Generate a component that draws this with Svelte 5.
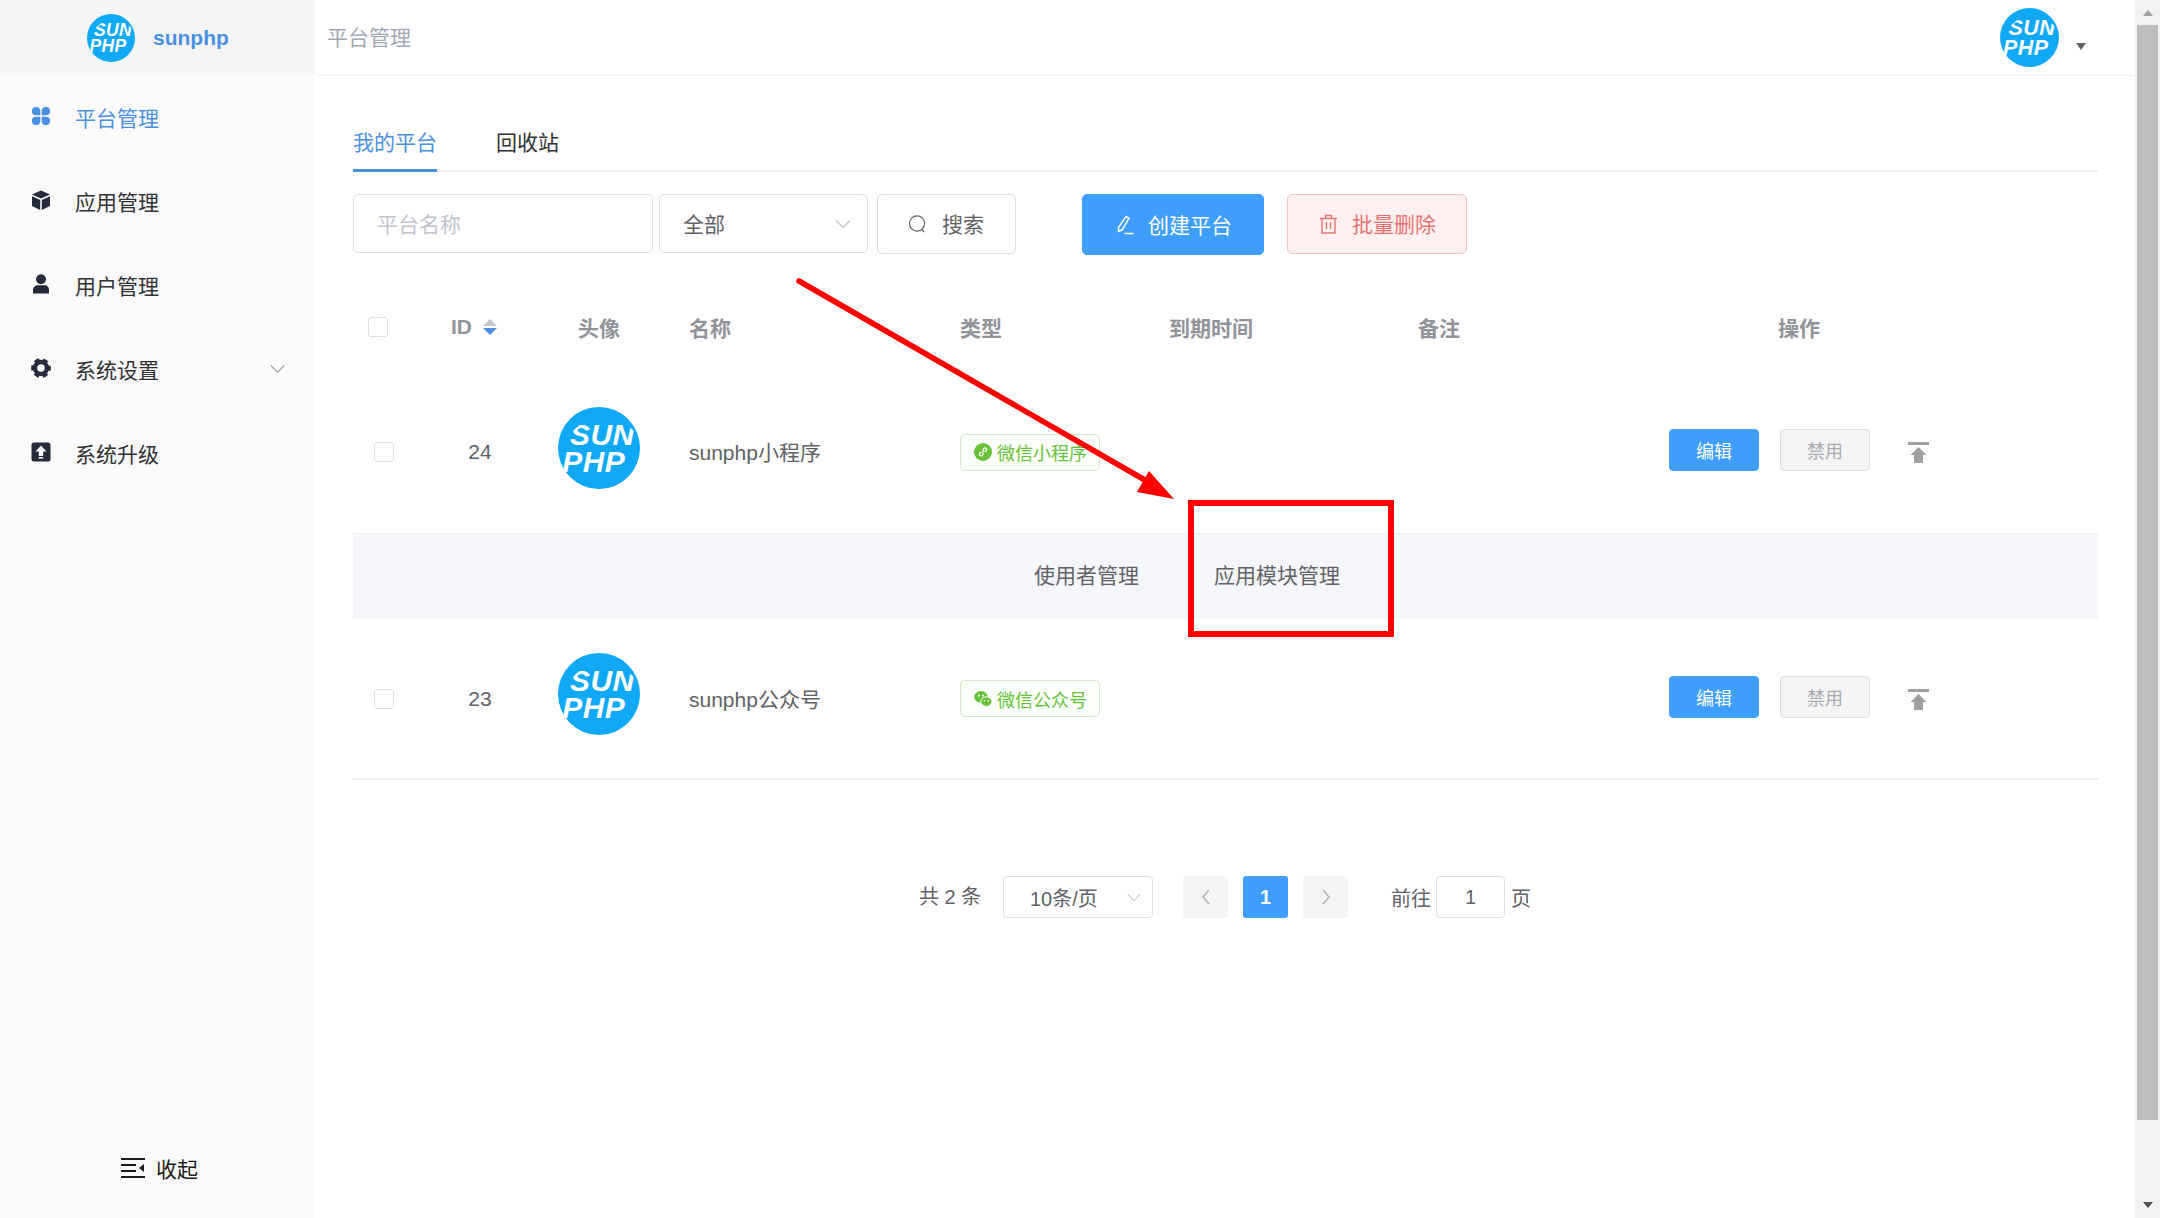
<script>
  // 平台管理 page: sidebar, tabs, toolbar, table with expanded row, pager
  const menu = [
    { key: "grid", label: "平台管理", active: true },
    { key: "cube", label: "应用管理" },
    { key: "user", label: "用户管理" },
    { key: "gear", label: "系统设置", more: true },
    { key: "up", label: "系统升级" },
  ];
  const rows = [
    { id: 24, name: "sunphp小程序", type: "微信小程序", icon: "mini", expanded: true },
    { id: 23, name: "sunphp公众号", type: "微信公众号", icon: "wechat" },
  ];
</script>

{#snippet logo(cls)}
  <svg class={cls} viewBox="0 0 48 48">
    <circle cx="24" cy="24" r="24" fill="#0fa9f7" />
    <g clip-path="circle(24px at 24px 24px)">
      <text x="7" y="22" class="logo-text">SUN</text>
      <text x="2.500" y="38" class="logo-text">PHP</text>
    </g>
  </svg>
{/snippet}

{#snippet chevron(cls)}
  <svg class={cls} viewBox="0 0 16 10"><path d="M1 1.5l7 7 7-7" fill="none" stroke="currentColor" stroke-width="1.2" /></svg>
{/snippet}

{#snippet menuIcon(key)}
  <svg class="micon" viewBox="0 0 20 20">
    {#if key === "grid"}
      <path d="M9.3 9.3H4.6a4.2 4.2 0 1 1 4.7-4.7zM10.7 9.3h4.7a4.2 4.2 0 1 0-4.7-4.7zM9.3 10.7H4.6a4.2 4.2 0 1 0 4.7 4.7zM10.7 10.7h4.7a4.2 4.2 0 1 1-4.7 4.7z" fill="currentColor" />
    {:else if key === "cube"}
      <path d="M10 0.5l9 4-9 4-9-4zM1 6.2l8.2 3.7V20L1 16zM19 6.2l-8.2 3.7V20l8.2-4z" fill="currentColor" />
    {:else if key === "user"}
      <circle cx="10" cy="5.2" r="5" fill="currentColor" />
      <path d="M1.5 19.5v-3.4c0-3.2 2.6-4.8 5-4.8h7c2.4 0 4 1.6 4 4.8v3.4z" fill="currentColor" transform="translate(0.5 0)" />
    {:else if key === "gear"}
      <circle cx="10" cy="10" r="6" fill="none" stroke="currentColor" stroke-width="4.4" />
      <circle cx="10" cy="10" r="8.6" fill="none" stroke="currentColor" stroke-width="2.6" stroke-dasharray="5.2 3.8" stroke-dashoffset="2.6" />
    {:else}
      <rect x="0.5" y="0.5" width="19" height="19" rx="2.5" fill="currentColor" />
      <path d="M10 3.5l5.5 6h-3.3v4.5H7.8V9.5H4.5z" fill="#fff" />
      <rect x="7.8" y="15" width="4.4" height="1.6" fill="#fff" />
    {/if}
  </svg>
{/snippet}

{#snippet tagIcon(key)}
  <svg class="tag-icon" viewBox="0 0 18 18">
    {#if key === "mini"}
      <circle cx="9" cy="9" r="9" fill="#67c23a" />
      <path d="M5.5 11.2c0 1.5 1.7 2.2 2.8 1.2.6-.6.7-1.2.7-2.4V7.6c0-1.3.3-2 1-2.4 1.2-.7 2.7.1 2.7 1.5 0 1-.7 1.6-1.6 1.8M6.900 9.500c-.9.2-1.400.800-1.400 1.700" fill="none" stroke="#fff" stroke-width="1.300" stroke-linecap="round" />
    {:else}
      <ellipse cx="7" cy="6.800" rx="6.800" ry="5.800" fill="#67c23a" />
      <ellipse cx="12.400" cy="11.600" rx="5.600" ry="4.800" fill="#67c23a" stroke="#fff" stroke-width="1" />
      <circle cx="5" cy="5.500" r="1" fill="#fff" />
      <circle cx="9" cy="5.500" r="1" fill="#fff" />
      <circle cx="10.500" cy="10.800" r=".8" fill="#fff" />
      <circle cx="14.300" cy="10.800" r=".8" fill="#fff" />
    {/if}
  </svg>
{/snippet}

<div class="page">
  <aside class="side">
    <div class="brand">
      {@render logo("logo-brand")}
      <span class="brand-name">sunphp</span>
    </div>
    <nav>
      {#each menu as m}
        <div class="mitem" class:on={m.active}>
          {@render menuIcon(m.key)}
          <span>{m.label}</span>
          {#if m.more}{@render chevron("mchev")}{/if}
        </div>
      {/each}
    </nav>
    <div class="collapse">
      <svg class="cicon" viewBox="0 0 24 20">
        <path d="M0 1h24M0 7h15M0 13h15M0 19h24" stroke="#1a1a1a" stroke-width="2" fill="none" />
        <path d="M23 6v8l-5-4z" fill="#1a1a1a" />
      </svg>
      <span>收起</span>
    </div>
  </aside>

  <div class="body">
    <header class="top">
      <span class="crumb">平台管理</span>
      {@render logo("logo-top")}
      <i class="caret"></i>
    </header>

    <main>
      <div class="tabs">
        <span class="tab on">我的平台</span>
        <span class="tab">回收站</span>
      </div>

      <div class="toolbar">
        <div class="field name">平台名称</div>
        <div class="field sel"><span>全部</span>{@render chevron("fchev")}</div>
        <button class="btn search">
          <svg class="bicon" viewBox="0 0 20 20"><circle cx="9.500" cy="9.500" r="8" fill="none" stroke="currentColor" stroke-width="1.300" /><path d="M14.500 15.500l2.500 3" stroke="currentColor" stroke-width="1.300" /></svg>
          搜索
        </button>
        <button class="btn create">
          <svg class="bicon" viewBox="0 0 18 20"><path d="M9.500 1.500l3 1.800-6.800 11.500-3.600 1.600-.2-3.700z" fill="none" stroke="currentColor" stroke-width="1.500" /><path d="M8 18.500h9" stroke="currentColor" stroke-width="1.500" /></svg>
          创建平台
        </button>
        <button class="btn remove">
          <svg class="bicon" viewBox="0 0 18 20"><path d="M0.500 4.500h17M6 4.500V1.500h6v3M2.500 4.500v14.500h13V4.500M7 8v7M11 8v7" fill="none" stroke="currentColor" stroke-width="1.400" /></svg>
          批量删除
        </button>
      </div>

      <div class="thead cols">
        <span class="ccell head"><i class="check"></i></span>
        <span class="id-head">ID<i class="sort"><b class="asc"></b><b class="desc"></b></i></span>
        <span class="center">头像</span>
        <span class="pad">名称</span>
        <span>类型</span>
        <span>到期时间</span>
        <span>备注</span>
        <span class="ops-head">操作</span>
      </div>

      {#each rows as r}
        <div class="row cols" class:last={!r.expanded}>
          <span class="ccell"><i class="check"></i></span>
          <span class="center">{r.id}</span>
          <span class="center">{@render logo("logo-row")}</span>
          <span class="pad rname">{r.name}</span>
          <span><span class="tag">{@render tagIcon(r.icon)}{r.type}</span></span>
          <span></span>
          <span></span>
          <span class="ops">
            <button class="small edit">编辑</button>
            <button class="small off">禁用</button>
            <svg class="totop" viewBox="0 0 21 21"><path d="M0 1.500h21" stroke="#a0a0a0" stroke-width="3" /><path d="M10.500 5l8 8h-3.500v8h-9v-8h-3.500z" fill="#a0a0a0" /></svg>
          </span>
        </div>
        {#if r.expanded}
          <div class="expand">
            <span>使用者管理</span>
            <span>应用模块管理</span>
          </div>
        {/if}
      {/each}

      <div class="pager">
        <span class="total">共 2 条</span>
        <div class="psize"><span>10条/页</span>{@render chevron("pchev")}</div>
        <button class="pg gap-l"><svg viewBox="0 0 10 16"><path d="M8 1L2 8l6 7" fill="none" stroke="currentColor" stroke-width="1.500" /></svg></button>
        <button class="pg cur">1</button>
        <button class="pg"><svg viewBox="0 0 10 16"><path d="M2 1l6 7-6 7" fill="none" stroke="currentColor" stroke-width="1.500" /></svg></button>
        <span class="goto">前往</span>
        <div class="pinput">1</div>
        <span>页</span>
      </div>
    </main>
  </div>

  <div class="scroll">
    <i class="arrow up"></i>
    <div class="thumb"></div>
    <i class="arrow down"></i>
  </div>

  <!-- annotation drawn over the page -->
  <svg class="mark" viewBox="0 0 2160 1218">
    <path d="M799 281L1150 483" stroke="#f00" stroke-width="5.500" stroke-linecap="round" />
    <path d="M1174 499L1137 492L1149 471z" fill="#f00" />
    <rect x="1191" y="503" width="200" height="131" fill="none" stroke="#f00" stroke-width="6" />
  </svg>
</div>

<style>
  :global(body) { margin: 0; background: #fff; }
  .page { position: relative; width: 2160px; height: 1218px; overflow: hidden; display: grid; grid-template-columns: 315px 1fr 25px;
    font-family: "Liberation Sans", "Noto Sans CJK SC", sans-serif; font-size: 21px; color: #606266; }
  i { font-style: normal; display: block; }
  button { font: inherit; margin: 0; cursor: pointer; }

  .side { background: #fafafa; display: flex; flex-direction: column; height: 1218px; }
  .brand { height: 75px; background: #f5f5f5; display: flex; align-items: center; padding-left: 87px; gap: 18px; box-sizing: border-box; }
  .brand-name { font-size: 21px; font-weight: 700; color: #4a90e2; margin-top: 1px; }
  .logo-brand { width: 48px; height: 48px; }
  .logo-top { width: 59px; height: 59px; margin-left: auto; margin-top: -1px; }
  .logo-row { width: 82px; height: 82px; display: block; margin-bottom: 9px; }
  .logo-text { font: italic 700 17.5px "Liberation Sans", sans-serif; fill: #fff; letter-spacing: .3px; }

  nav { padding-top: 1px; }
  .mitem { height: 84px; display: flex; align-items: center; padding-left: 31px; color: #303133; }
  .mitem.on { color: #4a90e2; }
  .mitem span { margin-left: 24px; margin-bottom: 3px; }
  .micon { width: 20px; height: 20px; margin-top: -3px; margin-bottom: 1px; color: #252b3a; }
  .mitem.on .micon { color: #4a90e2; }
  .mchev { width: 15px; height: 10px; margin-left: 111px; margin-top: -2px; color: #909399; }
  .collapse { margin-top: auto; height: 100px; display: flex; align-items: center; padding-left: 121px; box-sizing: border-box; gap: 11px; color: #1a1a1a; }
  .cicon { width: 24px; height: 20px; }

  .body { min-width: 0; }
  .top { height: 76px; box-sizing: border-box; border-bottom: 1px solid #f2f2f2; display: flex; align-items: center; padding: 0 49px 0 12px; }
  .crumb { color: #a0a8b5; margin-bottom: 4px; }
  .caret { width: 0; height: 0; border: 5.5px solid transparent; border-top: 7px solid #606266; border-bottom: 0; margin: 17px 0 0 17px; }

  main { padding: 0 37px 0 38px; }
  .tabs { height: 96px; box-sizing: border-box; display: flex; align-items: flex-end; gap: 59px; border-bottom: 2px solid #f0f0f0; }
  .tab { height: 61px; line-height: 64px; color: #303133; box-sizing: border-box; margin-bottom: -2px; }
  .tab.on { color: #4a90e2; border-bottom: 3px solid #4a90e2; }

  .toolbar { display: flex; margin-top: 22px; height: 60px; }
  .field { height: 59px; box-sizing: border-box; border: 1px solid #dcdfe6; border-radius: 5px; display: flex; align-items: center; padding-left: 23px; padding-bottom: 2px; }
  .name { width: 300px; color: #c0c4cc; }
  .sel { width: 209px; margin-left: 6px; }
  .fchev { width: 16px; height: 10px; margin-left: auto; margin-right: 16px; margin-top: 2px; color: #c0c4cc; }
  .btn { height: 60px; box-sizing: border-box; border: 1px solid #dcdfe6; border-radius: 5px; background: #fff; color: #606266; display: flex; align-items: center; padding: 0 0 2px; font-size: 21px; }
  .bicon { width: 19px; height: 20px; flex: none; margin-top: 2px; }
  .search { width: 139px; margin-left: 9px; padding-left: 30px; gap: 15px; }
  .create { width: 182px; margin-left: 66px; background: #409eff; border-color: #409eff; color: #fff; padding-left: 33px; gap: 13px; height: 61px; }
  .remove { width: 180px; margin-left: 23px; background: #fef0f0; border-color: #f5c6c6; color: #e57373; padding-left: 31px; gap: 14px; }

  .cols { display: grid; grid-template-columns: 87px 80px 158px 282px 209px 249px 250px 1fr; align-items: center; }
  .thead { margin-top: 36px; height: 83px; padding-bottom: 10px; box-sizing: border-box; font-weight: 700; color: #909399; }
  .check { width: 20px; height: 20px; box-sizing: border-box; border: 1px solid #dcdfe6; border-radius: 3px; background: #fff; }
  .ccell { padding-left: 21px; }
  .ccell.head { padding-left: 15px; }
  .id-head { display: flex; align-items: center; gap: 11px; margin-left: 11px; }
  .sort { display: flex; flex-direction: column; gap: 2px; }
  .sort b { display: block; width: 0; height: 0; border: 7.5px solid transparent; }
  .asc { border-top: 0 !important; border-bottom: 7.5px solid #c0c4cc !important; }
  .desc { border-bottom: 0 !important; border-top: 7.5px solid #4a90e2 !important; }
  .center { text-align: center; display: flex; justify-content: center; }
  .pad { padding-left: 11px; }
  .rname { padding-bottom: 2px; }
  .ops-head { padding-left: 110px; }

  .row { height: 158px; }
  .row.last { height: 159px; border-bottom: 2px solid #ebeef5; }
  .tag { display: inline-flex; align-items: center; gap: 5px; height: 37px; width: 140px; box-sizing: border-box; padding-left: 13px; border: 1px solid #d5e8c8; border-radius: 5px; font-size: 18px; color: #67c23a; background: #fbfef9; }
  .tag-icon { width: 18px; height: 18px; }
  .ops { display: flex; align-items: center; margin-bottom: 4px; }
  .small { width: 90px; height: 42px; box-sizing: border-box; border: 1px solid #409eff; border-radius: 4px; font-size: 18px; padding: 0; margin-left: 1px; }
  .edit { background: #409eff; color: #fff; }
  .off { background: #f4f4f5; border-color: #dcdfe6; color: #a8abb2; margin-left: 21px; }
  .totop { width: 21px; height: 21px; margin-left: 38px; margin-top: 5px; }

  .expand { height: 86px; margin-top: 2px; background: #f4f6f9; border-top: 1px solid #eef0f3; box-sizing: border-box; display: flex; align-items: center; padding: 0 0 5px 681px; gap: 75px; }

  .pager { display: flex; align-items: center; height: 42px; margin-top: 96px; padding-left: 566px; font-size: 20px; }
  .total { width: 85px; margin-bottom: 3px; }
  .psize { width: 150px; height: 42px; box-sizing: border-box; border: 1px solid #dcdfe6; border-radius: 4px; display: flex; align-items: center; padding-left: 26px; margin-left: -1px; }
  .pchev { width: 14px; height: 9px; margin-left: auto; margin-right: 11px; color: #c0c4cc; }
  .pg { width: 45px; height: 42px; border: 0; border-radius: 3px; background: #f4f4f5; color: #b0b3b8; margin-left: 15px; padding: 0; display: flex; align-items: center; justify-content: center; font-weight: 700; }
  .pg svg { width: 10px; height: 16px; }
  .gap-l { margin-left: 30px; }
  .cur { background: #409eff; color: #fff; }
  .goto { margin-left: 43px; }
  .pinput { width: 69px; height: 42px; box-sizing: border-box; border: 1px solid #dcdfe6; border-radius: 4px; margin: 0 6px 0 5px; display: flex; align-items: center; justify-content: center; }

  .scroll { background: #f1f1f1; display: flex; flex-direction: column; align-items: center; height: 1218px; }
  .thumb { width: 21px; height: 1095px; background: #bdbdbd; }
  .arrow { width: 0; height: 0; border: 5.500px solid transparent; }
  .arrow.up { border-top: 0; border-bottom: 6px solid #a0a0a0; margin: 10px 0 9px; }
  .arrow.down { border-bottom: 0; border-top: 6px solid #505050; margin-top: 82px; }

  .mark { position: absolute; left: 0; top: 0; width: 2160px; height: 1218px; pointer-events: none; }
</style>
